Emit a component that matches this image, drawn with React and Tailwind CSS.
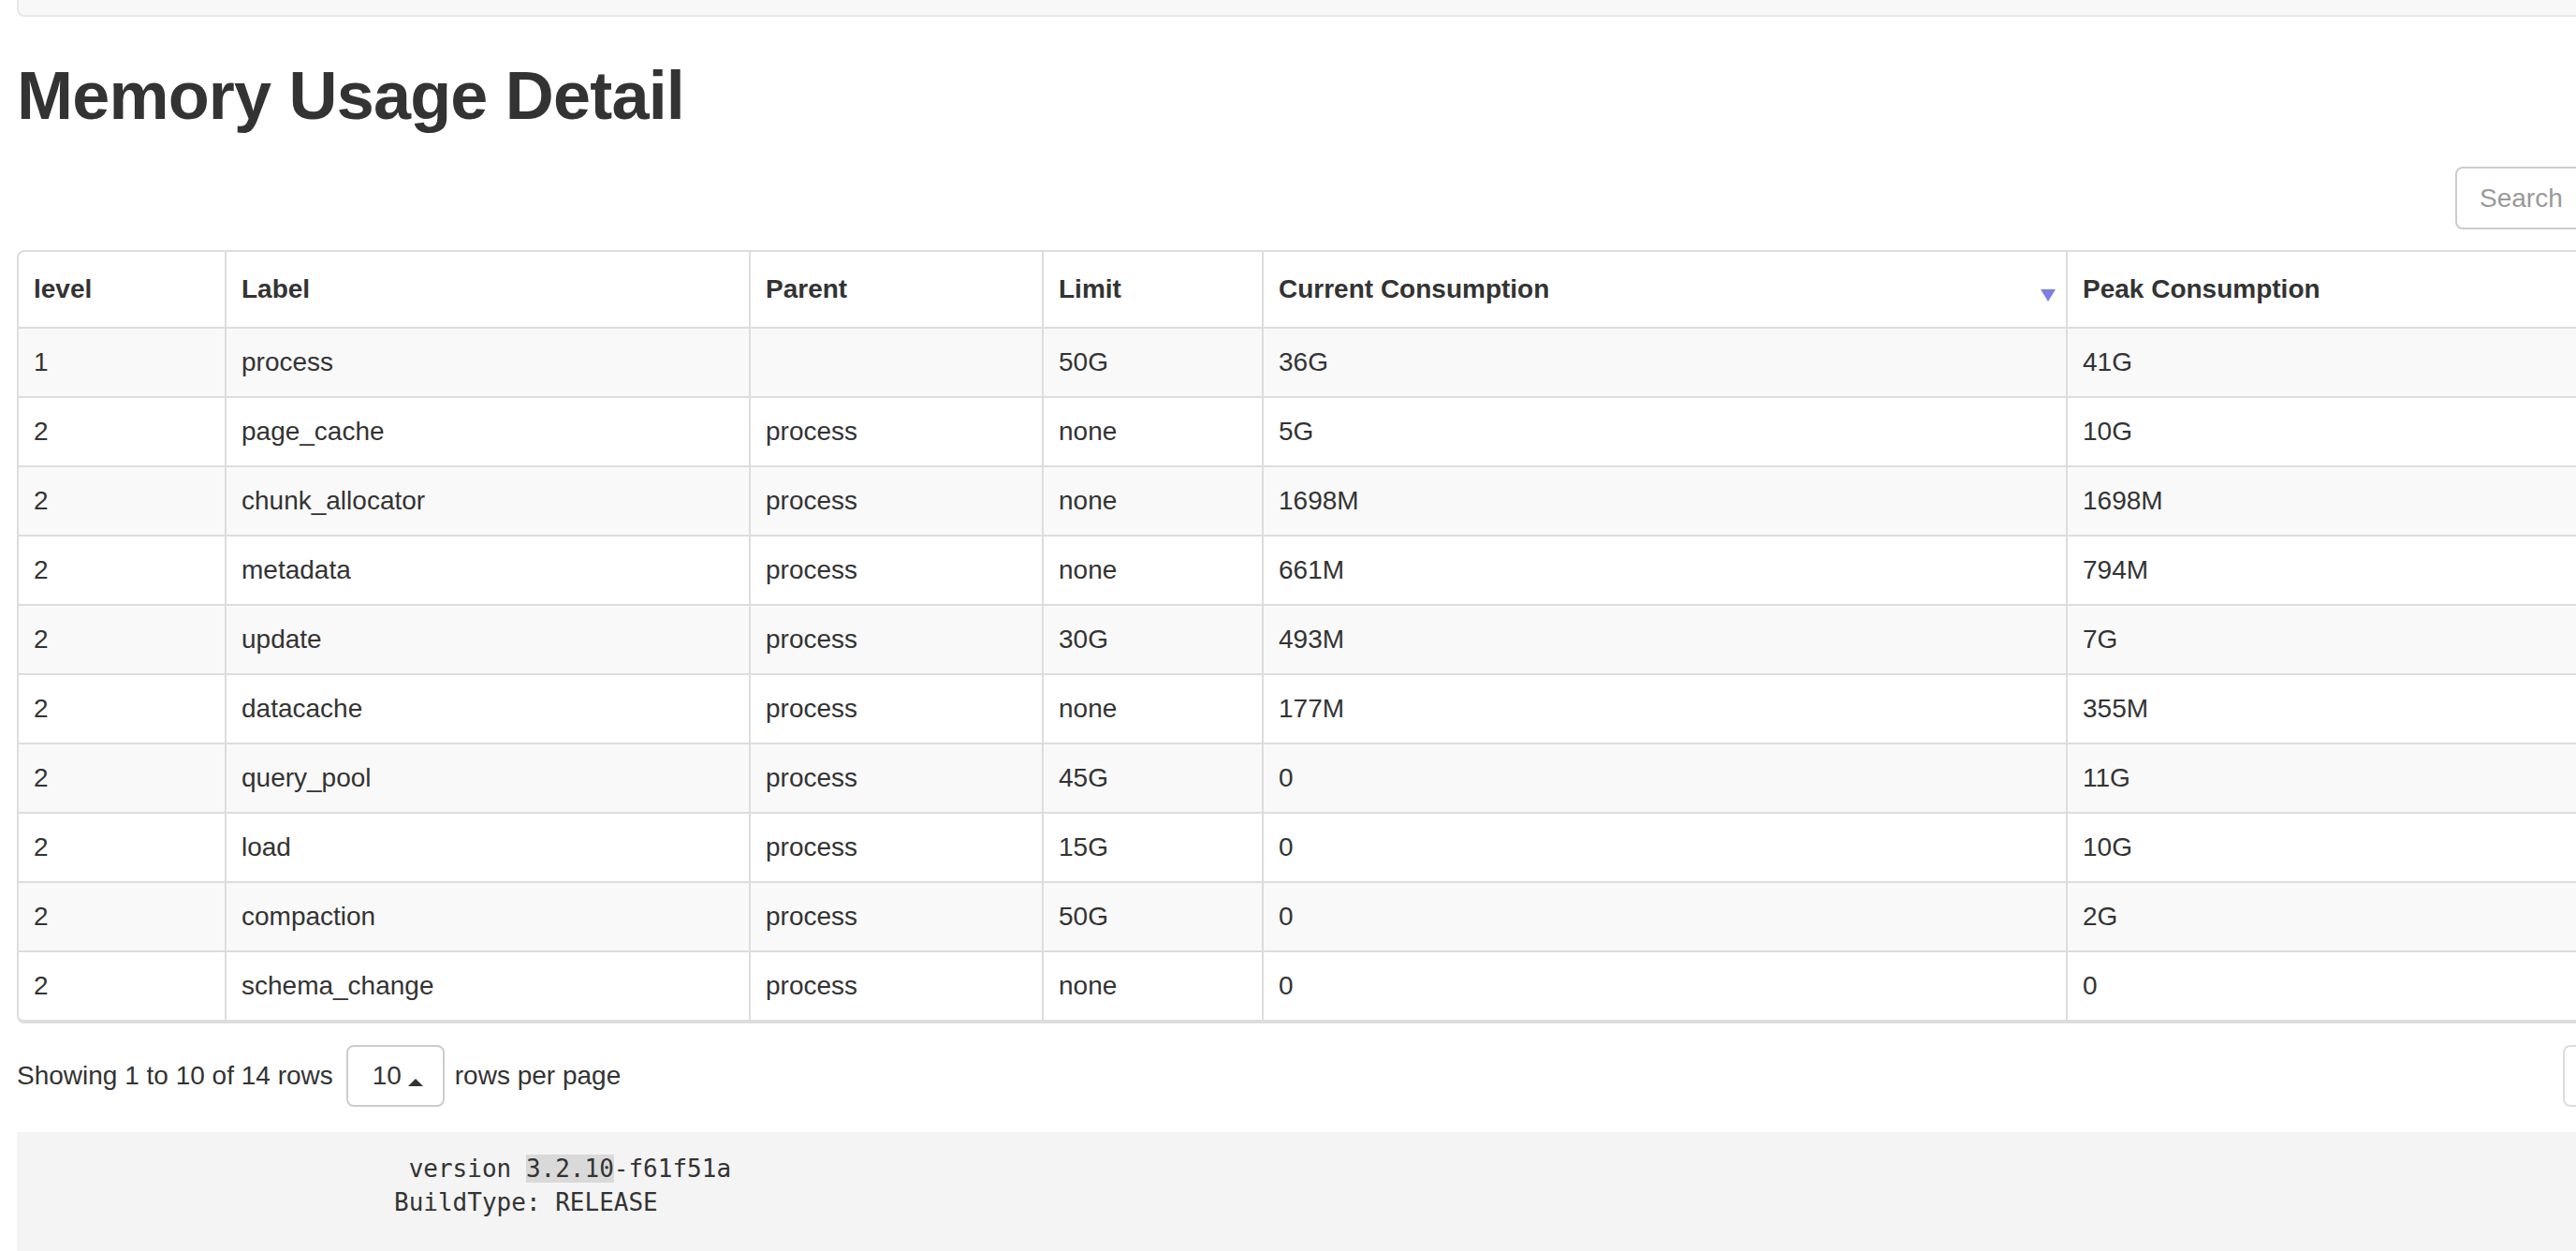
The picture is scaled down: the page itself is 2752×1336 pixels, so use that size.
import React from "react";

const rows = [
  ["1", "process", "", "50G", "36G", "41G"],
  ["2", "page_cache", "process", "none", "5G", "10G"],
  ["2", "chunk_allocator", "process", "none", "1698M", "1698M"],
  ["2", "metadata", "process", "none", "661M", "794M"],
  ["2", "update", "process", "30G", "493M", "7G"],
  ["2", "datacache", "process", "none", "177M", "355M"],
  ["2", "query_pool", "process", "45G", "0", "11G"],
  ["2", "load", "process", "15G", "0", "10G"],
  ["2", "compaction", "process", "50G", "0", "2G"],
  ["2", "schema_change", "process", "none", "0", "0"],
];

const grid = "grid grid-cols-[220px_560px_313px_235px_859px_1fr]";

function SortArrow() {
  return (
    <svg width="16" height="13" viewBox="0 0 16 13" className="mt-[12px] shrink-0">
      <polygon points="0,0 16,0 8,13" fill="#7c7fe3" />
    </svg>
  );
}

export default function App() {
  const headers = ["level", "Label", "Parent", "Limit", "Current Consumption", "Peak Consumption"];
  return (
    <div className="w-[2752px] h-[1336px] overflow-hidden bg-white text-[#333] font-['Liberation_Sans',Arial,sans-serif]">
      <div className="ml-[18px] w-[2982px]">
        {/* navbar remnant */}
        <div className="h-[18px] bg-[#f8f8f8] border-x-2 border-b-2 border-[#e7e7e7] rounded-b-[8px]" />

        <h1 className="mt-[45px] h-[79px] text-[72px] leading-[79px] font-bold tracking-[-0.8px] text-[#333]">
          Memory Usage Detail
        </h1>

        {/* toolbar */}
        <div className="mt-[36px] flex justify-end">
          <div className="w-[377px] h-[67px] border-2 border-[#ccc] rounded-[8px] flex items-center pl-[24px] text-[28px] text-[#999]">
            Search
          </div>
        </div>

        {/* table */}
        <div className="mt-[22px] border-2 border-b-4 border-[#ddd] rounded-[8px] overflow-hidden text-[28px] leading-[40px]">
          <div className={`${grid} h-[82px] border-b-2 border-[#ddd] font-bold`}>
            {headers.map((h, i) => (
              <div
                key={h}
                className={`flex items-center justify-between pl-[16px] pr-[11px] ${i > 0 ? "border-l-2 border-[#ddd]" : ""}`}
              >
                <span>{h}</span>
                {i === 4 && <SortArrow />}
              </div>
            ))}
          </div>
          {rows.map((r, ri) => (
            <div
              key={ri}
              className={`${grid} ${ri < rows.length - 1 ? "h-[74px] border-b-2 border-[#ddd]" : "h-[72px]"} ${ri % 2 === 0 ? "bg-[#f9f9f9]" : "bg-white"}`}
            >
              {r.map((c, ci) => (
                <div
                  key={ci}
                  className={`flex items-center pl-[16px] ${ci > 0 ? "border-l-2 border-[#ddd]" : ""}`}
                >
                  {c}
                </div>
              ))}
            </div>
          ))}
        </div>

        {/* pagination detail */}
        <div className="mt-[23px] flex items-center justify-between text-[28px]">
          <div className="flex items-center">
            <span>Showing 1 to 10 of 14 rows</span>
            <div className="ml-[14px] w-[105px] h-[66px] border-2 border-[#ccc] rounded-[8px] flex items-center pl-[26px]">
              <span className="leading-none">10</span>
              <svg width="16" height="8" viewBox="0 0 16 8" className="ml-[7px] mt-[14px]">
                <polygon points="8,0 16,8 0,8" fill="#333" />
              </svg>
            </div>
            <span className="ml-[11px]">rows per page</span>
          </div>
          <div className="w-[262px] h-[66px] border-2 border-[#ddd] rounded-l-[8px]" />
        </div>

        {/* version pre */}
        <div className="mt-[27px] h-[200px] bg-[#f4f4f4] pt-[21px] pl-[403px] font-['DejaVu_Sans_Mono',monospace] text-[26px] leading-[36px] whitespace-pre text-[#333]">
          <div>
            {" version "}
            <span className="bg-[#d9d9d9]">3.2.10</span>
            {"-f61f51a"}
          </div>
          <div>BuildType: RELEASE</div>
        </div>
      </div>
    </div>
  );
}
